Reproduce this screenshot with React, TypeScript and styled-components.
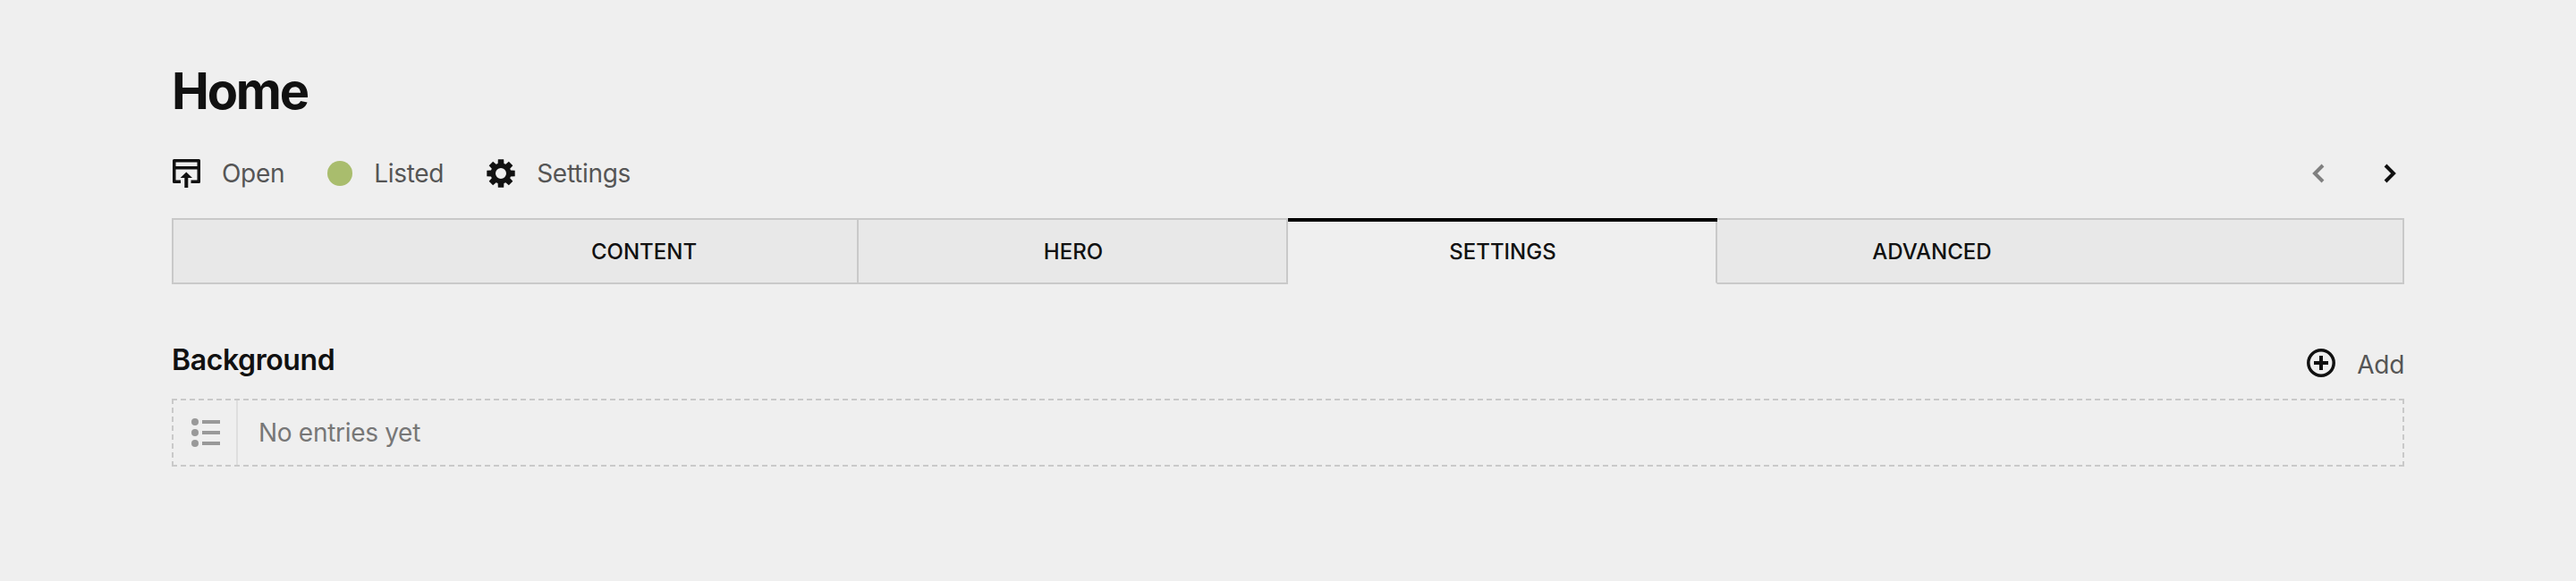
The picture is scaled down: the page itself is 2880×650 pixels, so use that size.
import styled, { createGlobalStyle } from 'styled-components';

const GlobalStyle = createGlobalStyle`
  html, body {
    margin: 0;
    padding: 0;
    background: #efefef;
    font-family: Inter, "Liberation Sans", sans-serif;
  }
`;

const tabs = [
  { label: 'CONTENT', edge: 'start' },
  { label: 'HERO' },
  { label: 'SETTINGS', active: true },
  { label: 'ADVANCED', edge: 'end' },
];

// eight toothed cog, centred on 16,16
const gearPath = () => {
  const point = (angle: number, r: number) =>
    `${(16 + r * Math.sin(angle)).toFixed(2)} ${(16 - r * Math.cos(angle)).toFixed(2)}`;
  let d = '';
  for (let i = 0; i < 8; i++) {
    const a = (i * Math.PI) / 4;
    d += `${i === 0 ? 'M' : 'L'}${point(a - 0.3, 11.5)}L${point(a - 0.2, 16)}L${point(a + 0.2, 16)}L${point(a + 0.3, 11.5)}`;
  }
  return d + 'Z M16 10a6 6 0 1 0 0 12a6 6 0 1 0 0-12Z';
};

export default function App() {
  return (
    <>
      <GlobalStyle />
      <Page>
        <Title>Home</Title>
        <Toolbar>
          <ToolGroup>
            <ToolItem>
              <svg width="32" height="32" viewBox="0 0 32 32">
                <path
                  fill="#111"
                  fillRule="evenodd"
                  d="M2.500 0h28A1.500 1.500 0 0 1 32 1.500v24a1.500 1.500 0 0 1-1.500 1.500h-9v-3.500h7v-12h-24v12H10V27H2.500A1.500 1.500 0 0 1 1 25.500v-24A1.500 1.500 0 0 1 2.500 0zM4.500 3.500V8h24V3.500z"
                />
                <path fill="#111" d="M16.300 14.500l6.700 6.500h-4.700v11h-4V21H9.600z" />
              </svg>
              <ToolLabel>Open</ToolLabel>
            </ToolItem>
            <ToolItem>
              <StatusDot />
              <ToolLabel>Listed</ToolLabel>
            </ToolItem>
            <ToolItem>
              <svg width="32" height="32" viewBox="0 0 32 32">
                <path fill="#111" fillRule="evenodd" d={gearPath()} />
              </svg>
              <ToolLabel>Settings</ToolLabel>
            </ToolItem>
          </ToolGroup>
          <Pager>
            <svg width="20" height="24" viewBox="0 0 20 24">
              <path d="M15 3l-9 9 9 9" fill="none" stroke="#808080" strokeWidth="4" />
            </svg>
            <svg width="20" height="24" viewBox="0 0 20 24">
              <path d="M5 3l9 9-9 9" fill="none" stroke="#111" strokeWidth="4" />
            </svg>
          </Pager>
        </Toolbar>
        <TabBar>
          {tabs.map((tab) => (
            <Tab key={tab.label} $active={tab.active} $edge={tab.edge}>
              <TabLabel>{tab.label}</TabLabel>
            </Tab>
          ))}
        </TabBar>
        <SectionHeader>
          <SectionTitle>Background</SectionTitle>
          <AddButton>
            <svg width="32" height="32" viewBox="0 0 32 32">
              <circle cx="16" cy="16" r="14.200" fill="none" stroke="#111" strokeWidth="3.500" />
              <path d="M16 8v16M8 16h16" fill="none" stroke="#111" strokeWidth="4" />
            </svg>
            <AddLabel>Add</AddLabel>
          </AddButton>
        </SectionHeader>
        <EmptyBox>
          <EmptyIcon>
            <svg width="32" height="32" viewBox="0 0 32 32" fill="#999">
              <circle cx="4" cy="4" r="4" />
              <circle cx="4" cy="16" r="4" />
              <circle cx="4" cy="28" r="4" />
              <rect x="12" y="2" width="20" height="4" />
              <rect x="12" y="14" width="20" height="4" />
              <rect x="12" y="26" width="20" height="4" />
            </svg>
          </EmptyIcon>
          <EmptyText>No entries yet</EmptyText>
        </EmptyBox>
      </Page>
    </>
  );
}

const Page = styled.div`
  height: 650px;
  box-sizing: border-box;
  padding: 72px 192px 0;
`;

const Title = styled.h1`
  margin: 0;
  font-size: 56px;
  line-height: 60px;
  font-weight: 700;
  letter-spacing: -2.2px;
  color: #111;
`;

const Toolbar = styled.div`
  display: flex;
  align-items: center;
  justify-content: space-between;
  height: 36px;
  margin-top: 44px;
`;

const ToolGroup = styled.div`
  display: flex;
  align-items: center;
  gap: 48px;
`;

const ToolItem = styled.div`
  display: flex;
  align-items: center;
  gap: 24px;
`;

const ToolLabel = styled.span`
  font-size: 28px;
  line-height: 36px;
  letter-spacing: -0.3px;
  color: #555;
`;

const AddLabel = styled(ToolLabel)`
  margin-top: 4px;
`;

const StatusDot = styled.span`
  width: 28px;
  height: 28px;
  border-radius: 50%;
  background: #a9bd6d;
`;

const Pager = styled.div`
  display: flex;
  align-items: center;
  gap: 60px;
  padding-right: 6px;
`;

const TabBar = styled.div`
  display: flex;
  margin-top: 32px;
  height: 74px;
`;

const Tab = styled.div<{ $active?: boolean; $edge?: string }>`
  position: relative;
  box-sizing: border-box;
  display: flex;
  align-items: center;
  width: ${(p) => (p.$edge ? '768px' : '480px')};
  justify-content: ${(p) =>
    p.$edge === 'start' ? 'flex-end' : p.$edge === 'end' ? 'flex-start' : 'center'};
  background: ${(p) => (p.$active ? '#efefef' : '#e8e8e8')};
  border: 2px solid #c9c9c9;
  border-left-width: ${(p) => (p.$edge === 'start' ? '2px' : '0')};
  border-bottom-color: ${(p) => (p.$active ? 'transparent' : '#c9c9c9')};

  ${(p) =>
    p.$active &&
    `
    &::before {
      content: '';
      position: absolute;
      top: -2px;
      left: 0;
      right: -2px;
      height: 4px;
      background: #000;
    }
  `}
`;

const TabLabel = styled.span`
  box-sizing: border-box;
  width: 478px;
  padding-left: 2px;
  text-align: center;
  font-size: 24px;
  font-weight: 500;
  color: #111;
`;

const SectionHeader = styled.div`
  display: flex;
  align-items: flex-end;
  justify-content: space-between;
  margin-top: 64px;
  height: 42px;
`;

const SectionTitle = styled.h2`
  align-self: flex-start;
  margin: 1px 0 0;
  font-size: 32px;
  line-height: 40px;
  font-weight: 600;
  letter-spacing: -0.4px;
  color: #111;
`;

const AddButton = styled.div`
  display: flex;
  align-items: center;
  gap: 24px;
  margin-bottom: -2px;
`;

const EmptyBox = styled.div`
  display: flex;
  align-items: stretch;
  box-sizing: border-box;
  height: 76px;
  margin-top: 22px;
  border: 2px dashed #c9c9c9;
`;

const EmptyIcon = styled.div`
  display: flex;
  align-items: center;
  justify-content: center;
  box-sizing: border-box;
  width: 72px;
  padding-left: 2px;
  border-right: 2px solid #dedede;
`;

const EmptyText = styled.div`
  display: flex;
  align-items: center;
  padding-left: 23px;
  font-size: 28px;
  letter-spacing: -0.3px;
  color: #777;
`;
